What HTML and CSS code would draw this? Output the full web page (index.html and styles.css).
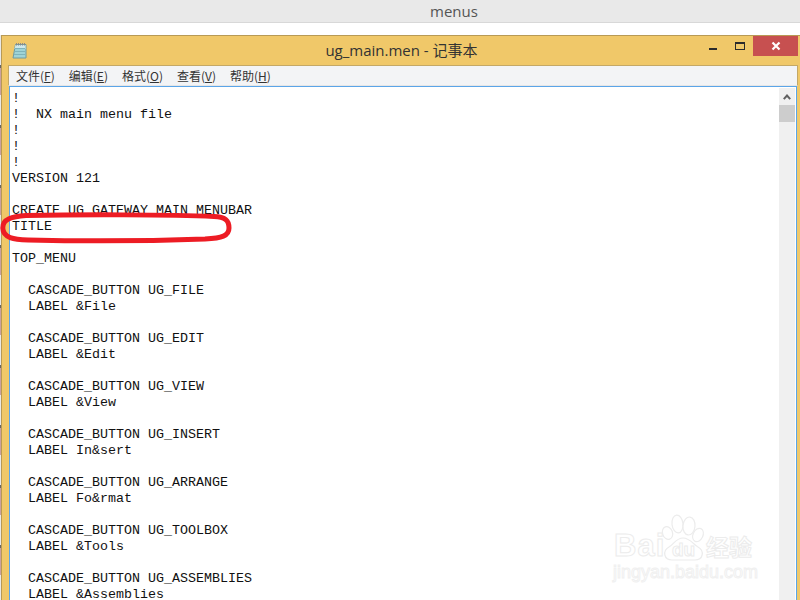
FILE: index.html
```html
<!DOCTYPE html>
<html lang="zh">
<head>
<meta charset="utf-8">
<title>menus</title>
<link rel="stylesheet" href="styles.css">
</head>
<body>
<header class="topbar"><span class="topbar-title">menus</span></header>
<main class="desk">
  <section class="window">
    <div class="titlebar">
      <svg class="app-icon" width="16" height="18" viewBox="0 0 16 18">
        <path d="M3.500 2.500h10.500v13.500H1z" fill="#9fd3d6" stroke="#6f9aa0" stroke-width="1"/>
        <path d="M3.500 3h10v4H2.500z" fill="#cfe8ea"/>
        <path d="M3 6.500h10M2.500 9.500h10.500M2 12.500h11" stroke="#7fb4ba" stroke-width="1"/>
        <path d="M4.500 1v2.500M6.500 1v2.500M8.500 1v2.500M10.500 1v2.500M12.500 1v2.500" stroke="#8a8a8a" stroke-width="1"/>
      </svg>
      <h1 class="win-title">ug_main.men - 记事本</h1>
      <div class="controls">
        <span class="ctl-min"></span>
        <span class="ctl-max"></span>
        <span class="ctl-close">
          <svg width="10" height="10" viewBox="0 0 10 10"><path d="M1.500 1.500l7 7M8.500 1.500l-7 7" stroke="#fff" stroke-width="2.200"/></svg>
        </span>
      </div>
    </div>
    <nav class="menubar">
      <span>文件(<u>F</u>)</span>
      <span>编辑(<u>E</u>)</span>
      <span>格式(<u>O</u>)</span>
      <span>查看(<u>V</u>)</span>
      <span>帮助(<u>H</u>)</span>
    </nav>
    <div class="editor">
<pre class="text">!
!  NX main menu file
!
!
!
VERSION 121

CREATE_UG_GATEWAY_MAIN_MENUBAR
TITLE

TOP_MENU

  CASCADE_BUTTON UG_FILE
  LABEL &amp;File

  CASCADE_BUTTON UG_EDIT
  LABEL &amp;Edit

  CASCADE_BUTTON UG_VIEW
  LABEL &amp;View

  CASCADE_BUTTON UG_INSERT
  LABEL In&amp;sert

  CASCADE_BUTTON UG_ARRANGE
  LABEL Fo&amp;rmat

  CASCADE_BUTTON UG_TOOLBOX
  LABEL &amp;Tools

  CASCADE_BUTTON UG_ASSEMBLIES
  LABEL &amp;Assemblies</pre>
      <div class="scrollbar">
        <div class="sb-btn">
          <svg width="8" height="6" viewBox="0 0 8 6"><path d="M.8 5.200L4 1.500l3.200 3.700" fill="none" stroke="#606060" stroke-width="2"/></svg>
        </div>
        <div class="sb-thumb"></div>
      </div>
    </div>
  </section>
</main>
<svg class="annotation" width="236" height="34" viewBox="0 212 236 34">
  <path d="M26 215.500C80 214.500 170 214.500 214 216.500C225 217 229 220 229 228C229 236 222 238 205 239C150 241 70 241 28 240C14 239.500 3 238 2.800 228C2.500 219 12 216.500 26 215.500Z" fill="none" stroke="#ed1c24" stroke-width="5"/>
</svg>
<svg class="watermark" width="160" height="80" viewBox="0 0 160 80">
  <g class="wm-paw">
    <ellipse cx="57.500" cy="23" rx="5" ry="6.500" transform="rotate(-20 57.500 23)"/>
    <ellipse cx="67.500" cy="14" rx="5.500" ry="9" transform="rotate(-6 67.500 14)"/>
    <ellipse cx="79" cy="16" rx="6" ry="9" transform="rotate(6 79 16)"/>
    <ellipse cx="88" cy="25" rx="5" ry="7" transform="rotate(25 88 25)"/>
    <path d="M73 28C66 28 63 35 59 37C52 41 54 50 62 50L85 50C93 50 95 41 88 37C84 35 80 28 73 28Z"/>
  </g>
  <text class="wm-text wm-bai" x="4" y="46">Bai</text>
  <text class="wm-text wm-du" x="62" y="46">du</text>
  <text class="wm-text wm-cn" x="96" y="46">经验</text>
  <text class="wm-text wm-url" x="3" y="68">jingyan.baidu.com</text>
</svg>
</body>
</html>
```
FILE: styles.css
```css
* { box-sizing: border-box; }
html, body { margin: 0; height: 600px; overflow: hidden; background: #fff; }
body { display: flex; flex-direction: column; position: relative; font-family: "Noto Sans CJK SC", "Open Sans", sans-serif; }

.topbar {
  height: 23px; flex: none; background: #e9e9e9; border-bottom: 1px solid #d8d8d8;
  display: flex; justify-content: center; padding-left: 108px;
}
.topbar-title { font: 15px/23px "Open Sans", sans-serif; color: #555; }

.desk {
  flex: 1; min-height: 0; margin-top: 12px; padding-left: 1px; display: flex;
  background: repeating-linear-gradient(180deg, #e8e8e8 0 30px, #666 30px 33px, #c9a0a0 33px 60px);
}
.window {
  flex: 1; background: #f0c869; border-top: 1px solid #b89a55; border-left: 1px solid #b89a55;
  display: flex; flex-direction: column; padding-right: 2px; min-width: 0;
}
.titlebar { height: 29px; flex: none; display: flex; align-items: flex-start; padding-left: 10px; }
.app-icon { margin-top: 6px; flex: none; }
.win-title { flex: 1; margin: 4px 0 0; padding-left: 66px; text-align: center; font: 400 15px/20px "Open Sans", "Noto Sans CJK SC", sans-serif; color: #333; }
.controls { display: flex; flex: none; align-items: flex-start; }
.ctl-min { width: 8px; height: 2px; background: #2b2b2b; margin-top: 12px; }
.ctl-max { width: 10px; height: 8px; border: 1px solid #2b2b2b; border-top-width: 2px; margin: 6px 8px 0 18px; }
.ctl-close { width: 45px; height: 20px; background: #c75050; display: flex; align-items: center; justify-content: center; }

.menubar {
  height: 21px; flex: none; margin-left: 6px; background: #f3f4f6;
  border: 1px solid #c4a866; border-bottom: 1px solid #e6e6e6;
  display: flex; gap: 14px; padding-left: 7px;
  font-size: 12px; line-height: 19px; color: #333;
}
.menubar span { white-space: nowrap; }

.editor {
  flex: 1; min-height: 0; margin-left: 7px; margin-right: 1px; background: #fff;
  border: 1px solid #5ba5e8; border-bottom: none; display: flex; overflow: hidden;
}
.text {
  flex: 1; margin: 0; padding: 4px 0 0 2px; overflow: hidden;
  font: 13.33px/16px "Liberation Mono", monospace; color: #111;
}
.scrollbar { width: 16px; flex: none; margin: 1px 1px 0 0; background: #f0f0f0; }
.sb-btn { height: 17px; display: flex; align-items: center; justify-content: center; }
.sb-thumb { height: 17px; background: #cdcdcd; }

.annotation { position: absolute; left: 0; top: 212px; }

.watermark { position: absolute; left: 610px; top: 510px; }
.wm-paw ellipse, .wm-paw path { fill: #fff; stroke: #ececec; stroke-width: 1.200; }
.wm-text { fill: #fff; stroke: #ececec; stroke-width: 1; }
.wm-bai { font: 700 31px "Liberation Sans", sans-serif; letter-spacing: 1px; }
.wm-du { font: 700 19px "Liberation Sans", sans-serif; }
.wm-cn { font: 700 23px "Noto Sans CJK SC", sans-serif; }
.wm-url { font: 400 18px "Liberation Sans", sans-serif; stroke: #f0f0f0; }
```
